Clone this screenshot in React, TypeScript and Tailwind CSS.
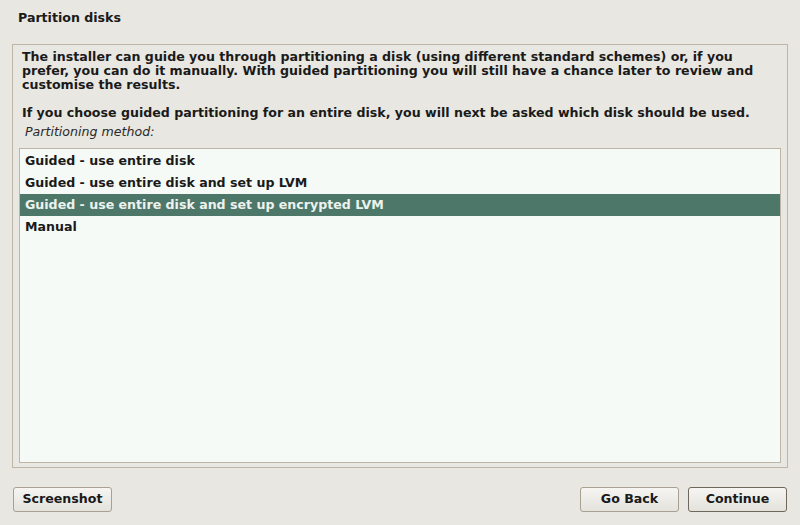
const options = [
  "Guided - use entire disk",
  "Guided - use entire disk and set up LVM",
  "Guided - use entire disk and set up encrypted LVM",
  "Manual",
];

const selected = 2;

function Button({ label, focused }: { label: string; focused?: boolean }) {
  return (
    <button
      className={
        "h-[25px] w-[99px] rounded-[3px] border bg-gradient-to-b from-[#f6f5f2] to-[#e4e2dc] text-[12.6px] font-bold text-[#1a1a1a] " +
        (focused ? "border-[#6e685c]" : "border-[#a8a192]")
      }
    >
      {label}
    </button>
  );
}

export default function App() {
  return (
    <div
      className="flex h-[525px] w-[800px] flex-col bg-[#e8e7e1] text-[#1a1a1a]"
      style={{ fontFamily: '"DejaVu Sans", sans-serif' }}
    >
      <div className="px-[18px] pt-[10px] text-[12.6px] font-bold leading-[16px]">Partition disks</div>

      <div className="mx-[12px] mt-[18px] flex h-[424px] w-[776px] flex-col border border-[#bdb6a6] pb-[4px]">
        <div className="px-[9px] pt-[5px] text-[12.6px] font-bold leading-[14px]">
          <p>
            The installer can guide you through partitioning a disk (using different standard schemes) or, if you
            prefer, you can do it manually. With guided partitioning you will still have a chance later to review and
            customise the results.
          </p>
          <p className="mt-[14px]">
            If you choose guided partitioning for an entire disk, you will next be asked which disk should be used.
          </p>
        </div>
        <div className="px-[12px] pt-[4px] text-[12.6px] italic leading-[16px] text-[#2a2a2a]">Partitioning method:</div>

        <div className="mx-[6px] mt-[8px] flex-1 border border-[#bdb6a6] bg-[#f6faf6] pt-[1px]">
          {options.map((o, i) => (
            <div
              key={o}
              className={
                "flex h-[22px] items-center px-[5px] text-[12.6px] font-bold " +
                (i === selected ? "bg-[#4d7869] text-[#eef2ef]" : "")
              }
            >
              {o}
            </div>
          ))}
        </div>
      </div>

      <div className="mt-[19px] flex items-center px-[13px]">
        <Button label="Screenshot" />
        <div className="flex-1" />
        <div className="flex gap-[9px]">
          <Button label="Go Back" />
          <Button label="Continue" focused />
        </div>
      </div>
    </div>
  );
}
